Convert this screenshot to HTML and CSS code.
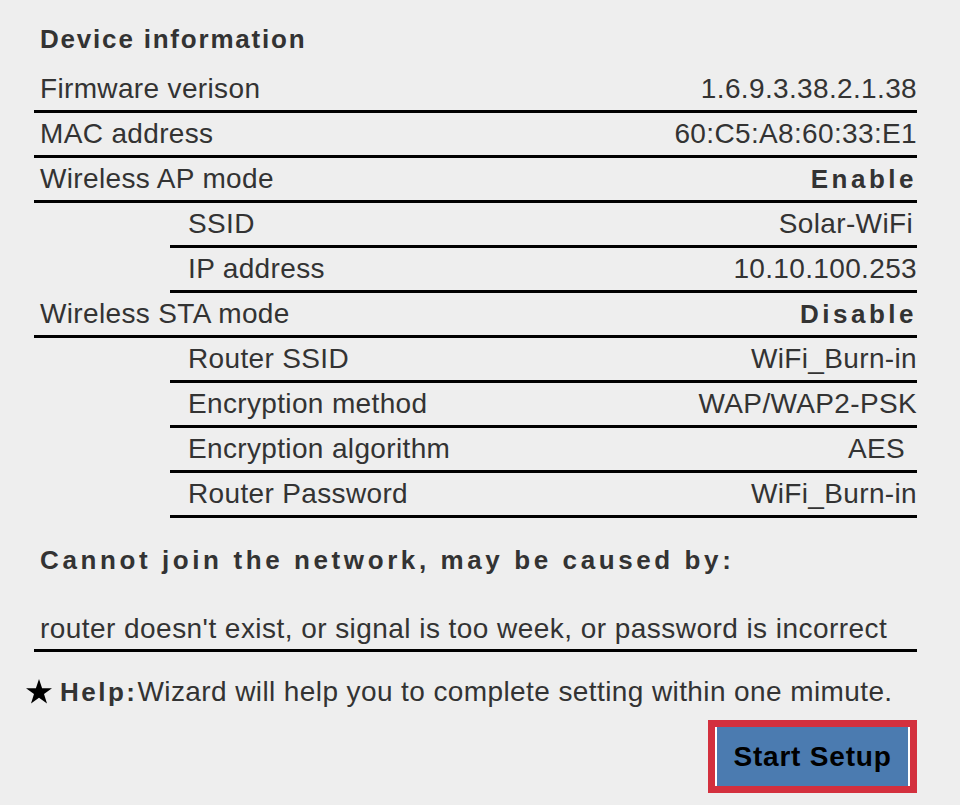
FILE: index.html
```html
<!DOCTYPE html>
<html lang="en">
<head>
    <meta charset="UTF-8">
    <meta name="viewport" content="width=device-width, initial-scale=1.0">
    <title>Device information</title>
    <link rel="stylesheet" href="styles.css">
</head>
<body>
    <div class="page">
        <h2 class="title">Device information</h2>

        <div class="info">
            <div class="row">
                <span class="label">Firmware verison</span>
                <span class="value">1.6.9.3.38.2.1.38</span>
            </div>
            <div class="row">
                <span class="label">MAC address</span>
                <span class="value">60:C5:A8:60:33:E1</span>
            </div>
            <div class="row">
                <span class="label">Wireless AP mode</span>
                <span class="value state">Enable</span>
            </div>
            <div class="row sub">
                <span class="label">SSID</span>
                <span class="value pad-s">Solar-WiFi</span>
            </div>
            <div class="row sub">
                <span class="label">IP address</span>
                <span class="value">10.10.100.253</span>
            </div>
            <div class="row">
                <span class="label">Wireless STA mode</span>
                <span class="value state">Disable</span>
            </div>
            <div class="row sub">
                <span class="label">Router SSID</span>
                <span class="value">WiFi_Burn-in</span>
            </div>
            <div class="row sub">
                <span class="label">Encryption method</span>
                <span class="value">WAP/WAP2-PSK</span>
            </div>
            <div class="row sub">
                <span class="label">Encryption algorithm</span>
                <span class="value pad-l">AES</span>
            </div>
            <div class="row sub">
                <span class="label">Router Password</span>
                <span class="value">WiFi_Burn-in</span>
            </div>
        </div>

        <p class="notice">Cannot join the network, may be caused by:</p>
        <p class="reason">router doesn't exist, or signal is too week, or password is incorrect</p>

        <p class="help">
            <svg class="star" width="26" height="26" viewBox="0 0 26 26">
                <polygon points="13,0 16.1,9.3 26,9.3 18,15.1 21,24.6 13,18.8 5,24.6 8,15.1 0,9.3 9.9,9.3" fill="#000"/>
            </svg>
            <b>Help:</b>Wizard will help you to complete setting within one mimute.
        </p>

        <div class="actions">
            <button type="button" class="setup-btn">Start Setup</button>
        </div>
    </div>
</body>
</html>
```

FILE: styles.css
```css
body {
    margin: 0;
    background-color: #eeeeee;
    color: #333333;
    font-family: "Liberation Sans", Arial, sans-serif;
}
.page {
    padding: 18px 43px 0 34px;
}
.title {
    margin: 0 0 8px 0;
    padding-left: 6px;
    font-size: 26px;
    line-height: 42px;
    letter-spacing: 1.8px;
}
.row {
    display: flex;
    justify-content: space-between;
    align-items: center;
    height: 42px;
    border-bottom: 3px solid #000;
    font-size: 28px;
    line-height: 42px;
    letter-spacing: 0.35px;
}
.row .label {
    padding-left: 6px;
}
.row.sub {
    margin-left: 136px;
}
.row.sub .label {
    padding-left: 18px;
}
.value.state {
    font-weight: bold;
    font-size: 26px;
    letter-spacing: 3.5px;
}
.value.pad-s {
    padding-right: 4px;
}
.value.pad-l {
    padding-right: 12px;
}
.notice {
    margin: 21px 0 0 0;
    padding-left: 6px;
    font-size: 26px;
    font-weight: bold;
    line-height: 42px;
    letter-spacing: 3.6px;
}
.reason {
    margin: 28px 0 0 0;
    padding-left: 6px;
    font-size: 28px;
    line-height: 40px;
    letter-spacing: 0.45px;
    border-bottom: 3px solid #000;
}
.help {
    display: flex;
    align-items: center;
    margin: 19px 0 0 -8px;
    font-size: 28px;
    line-height: 42px;
    letter-spacing: 0.4px;
}
.help .star {
    flex: none;
    margin-right: 8px;
}
.help b {
    font-size: 26px;
    letter-spacing: 2.5px;
}
.actions {
    display: flex;
    justify-content: flex-end;
    margin-top: 7px;
}
.setup-btn {
    width: 209px;
    height: 73px;
    border: 7px solid #d3303e;
    background-color: #4b7bb0;
    box-shadow: inset 2px 0 #ffffff, inset -2px 0 #ffffff;
    color: #000;
    font-family: "Liberation Sans", Arial, sans-serif;
    font-size: 28px;
    font-weight: bold;
    letter-spacing: 0.8px;
    cursor: pointer;
}
```
